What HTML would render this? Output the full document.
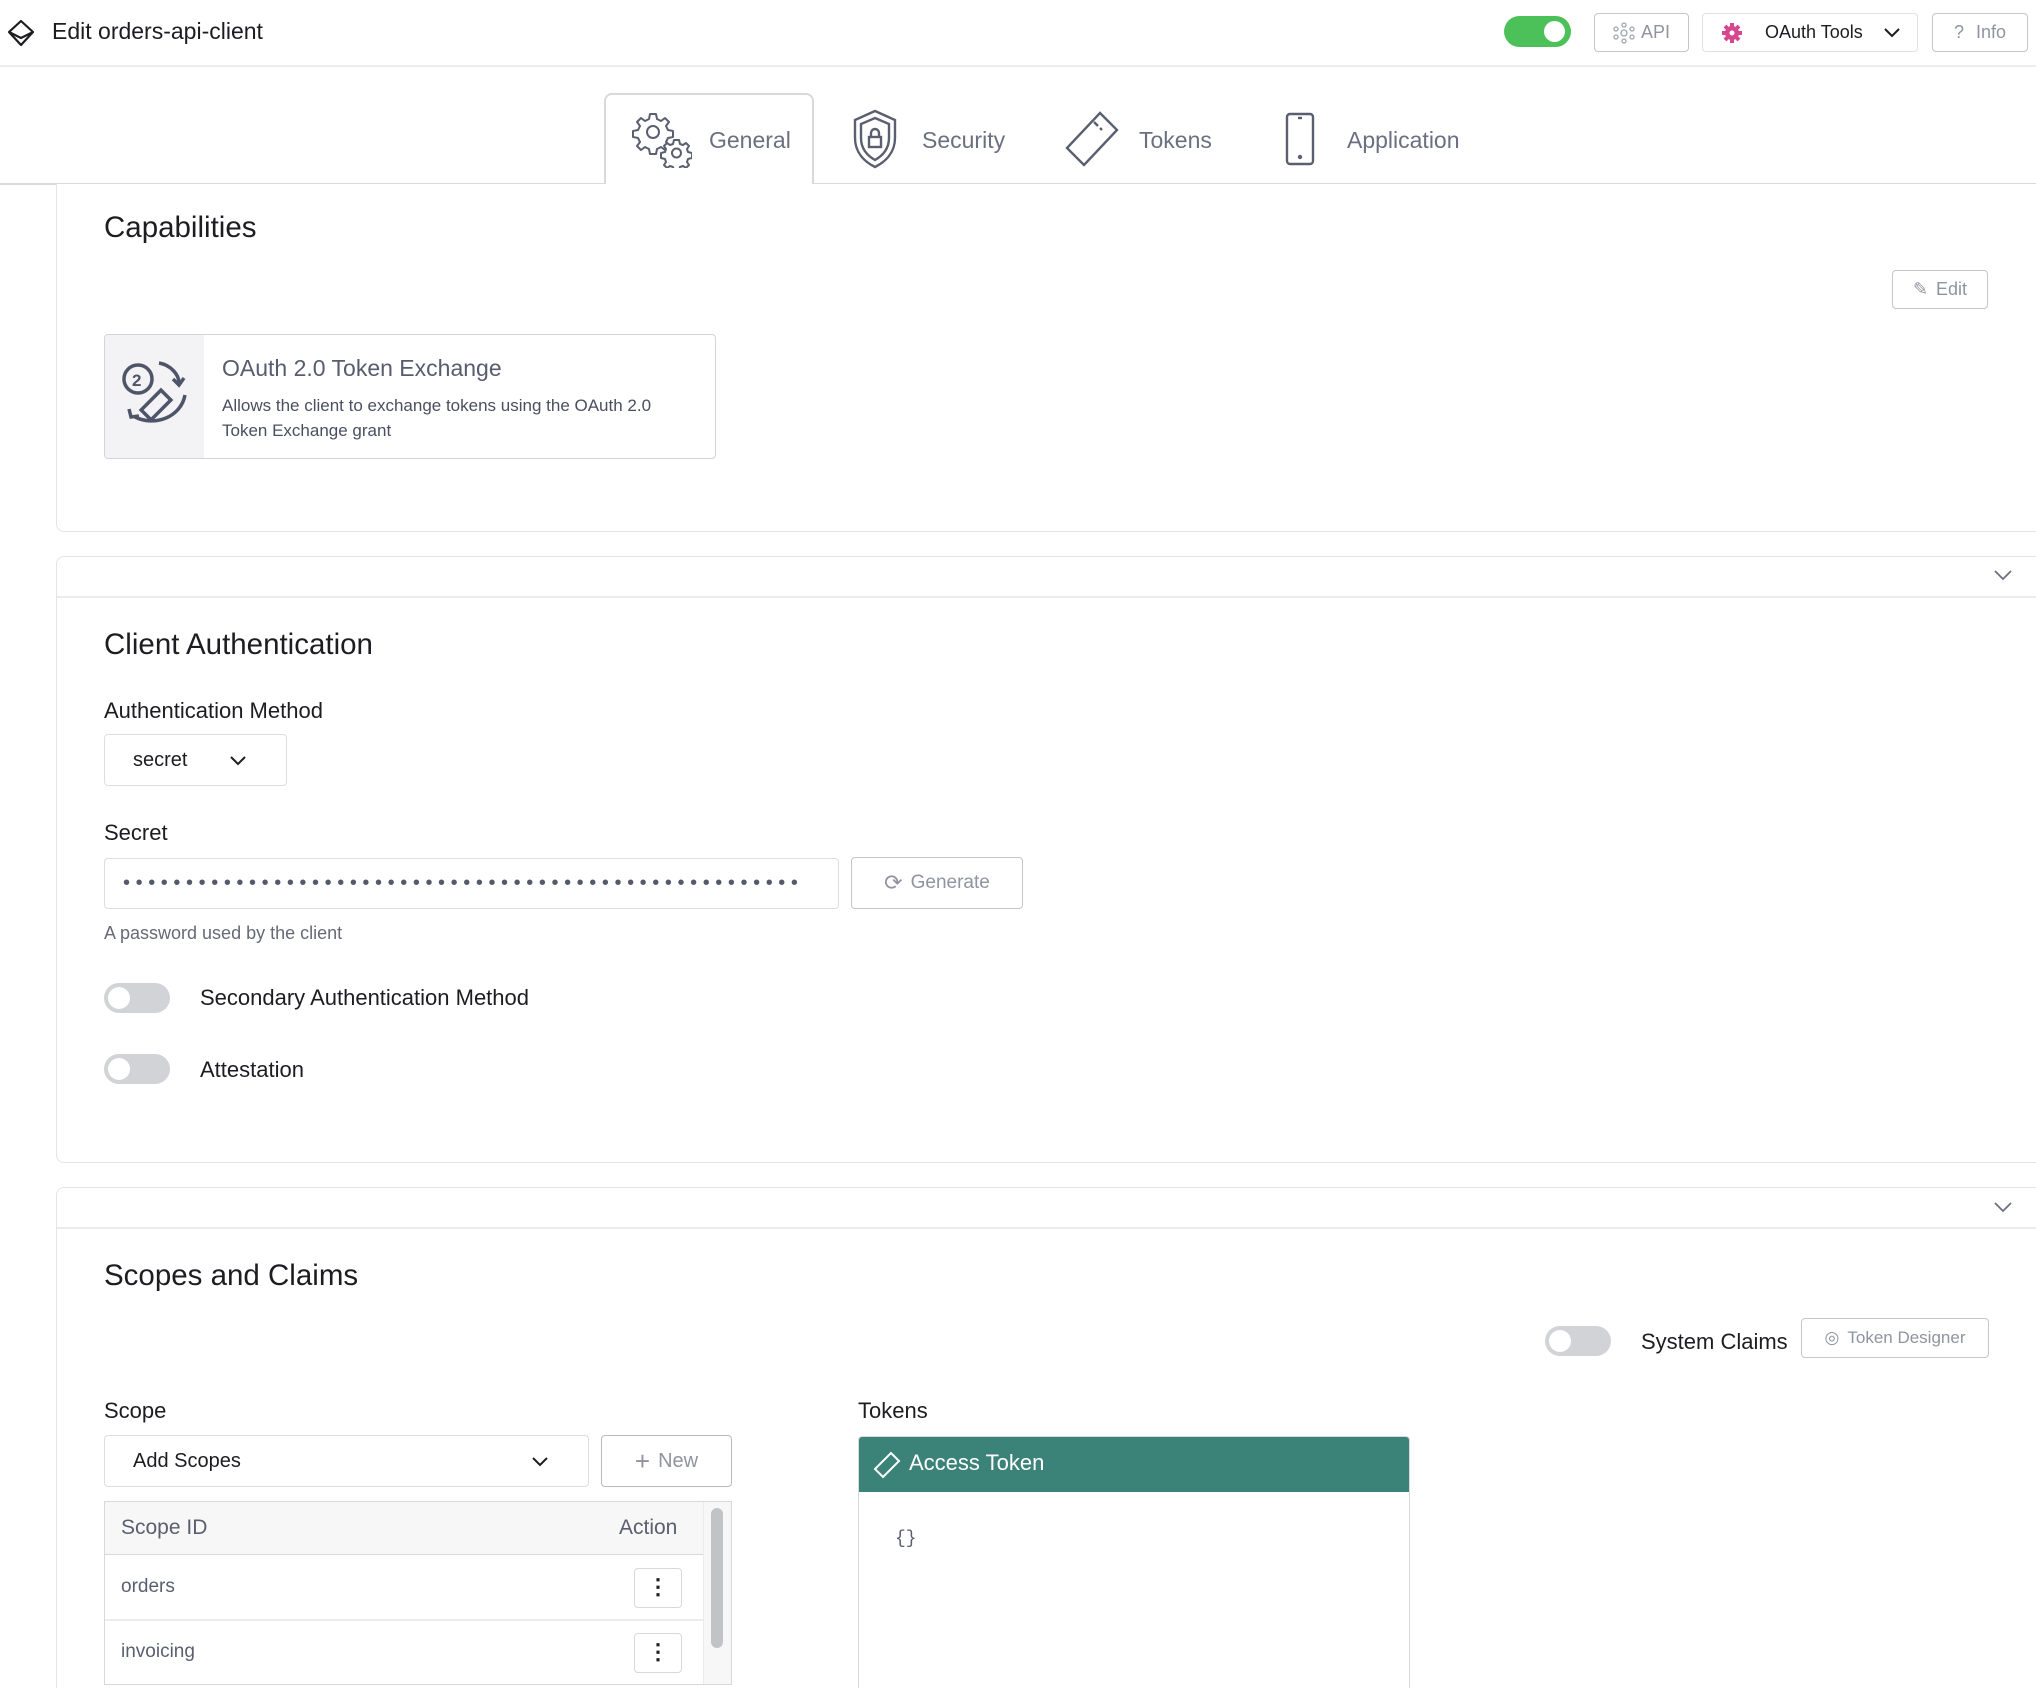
<!DOCTYPE html>
<html><head><meta charset="utf-8"><style>
*{box-sizing:border-box;margin:0;padding:0}
html,body{width:2036px;height:1688px;overflow:hidden}
body{background:#fff;font-family:"Liberation Sans",sans-serif;color:#1d1d21;position:relative}
.a{position:absolute}
.btn{position:absolute;border:1.5px solid #c4c6cc;border-radius:4px;background:#fff;display:flex;align-items:center;justify-content:center;color:#9094a0;font-size:18px}
.panel{position:absolute;left:56px;width:1990px;border:1.5px solid #e3e4e8;border-radius:8px;background:#fff}
.tog{position:absolute;width:66px;height:30px;border-radius:15px;background:#d2d3d6}
.tog::after{content:"";position:absolute;left:4px;top:4px;width:22px;height:22px;border-radius:50%;background:#fff}
.h{position:absolute;font-size:29.5px;color:#1d1d21}
.l{position:absolute;font-size:22px;color:#1d1d21}
.tab{position:absolute;font-size:23px;color:#6b7080;top:127px}
</style></head><body>
<svg class="a" style="left:6px;top:18px" width="30" height="30" viewBox="0 0 30 30" fill="none" stroke="#1d1d21" stroke-width="2.2" stroke-linejoin="round"><path d="M15 3 L27 14 L15 27 L3 14 Z"/><path d="M3 14 L15 20 L27 14"/></svg>
<div class="a" style="left:52px;top:18px;font-size:23px">Edit orders-api-client</div>
<div class="a" style="left:1504px;top:16px;width:67px;height:31px;border-radius:16px;background:#4cc159"><div class="a" style="left:40px;top:5px;width:21px;height:21px;border-radius:50%;background:#fff"></div></div>
<div class="btn" style="left:1594px;top:13px;width:95px;height:39px"><svg width="22" height="22" viewBox="0 0 22 22" fill="none" stroke="#a0a4ae" stroke-width="1.3" style="margin-right:6px"><circle cx="11" cy="11" r="3"/><circle cx="11" cy="3" r="2"/><circle cx="11" cy="19" r="2"/><circle cx="3" cy="7" r="2"/><circle cx="19" cy="7" r="2"/><circle cx="3" cy="15" r="2"/><circle cx="19" cy="15" r="2"/></svg>API</div>
<div class="btn" style="left:1702px;top:13px;width:216px;height:39px;border-color:#e0e1e4;color:#1d1d21;justify-content:flex-start;padding-left:18px"><svg width="22" height="22" viewBox="0 0 22 22" style="margin-right:22px"><circle cx="11" cy="11" r="7" fill="#d6478f"/><g stroke="#d6478f" stroke-width="4"><path d="M11 1v20M1 11h20M4 4l14 14M18 4L4 18"/></g><circle cx="11" cy="11" r="2.5" fill="#fff"/></svg>OAuth Tools<svg style="margin-left:20px" width="18" height="12" viewBox="0 0 18 12" fill="none" stroke="#1d1d21" stroke-width="2"><path d="M2 2l7 7 7-7"/></svg></div>
<div class="btn" style="left:1932px;top:13px;width:96px;height:39px"><span style="margin-right:12px">?</span>Info</div>
<div class="a" style="left:0;top:65px;width:2036px;height:1.5px;background:#ececee"></div>
<div class="a" style="left:0;top:183px;width:2036px;height:2px;background:#d8d9dc"></div>
<div class="a" style="left:604px;top:93px;width:210px;height:93px;border:2px solid #d8d9dc;border-bottom:none;border-radius:8px 8px 0 0;background:#fff"></div>
<svg class="a" style="left:632px;top:110px" width="60" height="58" viewBox="0 0 60 58" fill="none" stroke="#5a5f70" stroke-width="2" stroke-linejoin="round">
<path d="M18 4h6l1 5 4 2 4-3 4 4-3 4 2 4 5 1v6l-5 1-2 4 3 4-4 4-4-3-4 2-1 5h-6l-1-5-4-2-4 3-4-4 3-4-2-4-5-1v-6l5-1 2-4-3-4 4-4 4 3 4-2z"/><circle cx="21" cy="22" r="6"/>
<path d="M42 30h5l1 4 3 1 3-2 3 3-2 3 1 3 4 1v5l-4 1-1 3 2 3-3 3-3-2-3 1-1 4h-5l-1-4-3-1-3 2-3-3 2-3-1-3-4-1v-5l4-1 1-3-2-3 3-3 3 2 3-1z" fill="#fff"/><circle cx="44.5" cy="43" r="4.5"/></svg>
<div class="tab" style="left:709px">General</div>
<svg class="a" style="left:850px;top:108px" width="50" height="62" viewBox="0 0 50 62" fill="none" stroke="#5a5f70" stroke-width="2.4"><path d="M25 3 L45 12 V30 C45 45 35 54 25 59 C15 54 5 45 5 30 V12 Z"/><path d="M25 10 L39 16 V30 C39 41 32 48 25 52 C18 48 11 41 11 30 V16 Z"/><rect x="19" y="29" width="12" height="10"/><path d="M21 29v-4a4 4 0 0 1 8 0v4"/></svg>
<div class="tab" style="left:922px">Security</div>
<svg class="a" style="left:1064px;top:110px" width="56" height="58" viewBox="0 0 56 58" fill="none" stroke="#5a5f70" stroke-width="2.4"><path d="M36 3 L53 20 L20 55 L3 38 Z"/><path d="M30 12 l4 4 M36 18 l2 2" /></svg>
<div class="tab" style="left:1139px">Tokens</div>
<svg class="a" style="left:1284px;top:112px" width="32" height="54" viewBox="0 0 32 54" fill="none" stroke="#5a5f70" stroke-width="2.4"><rect x="3" y="2" width="26" height="50" rx="3"/><path d="M14 6h4"/><circle cx="16" cy="45" r="1"/></svg>
<div class="tab" style="left:1347px">Application</div>
<div class="panel" style="top:184px;height:348px;border-top:none;border-radius:0 0 0 8px"></div>
<div class="h" style="left:104px;top:211px">Capabilities</div>
<div class="btn" style="left:1892px;top:270px;width:96px;height:39px"><span style="margin-right:8px">✎</span>Edit</div>
<div class="a" style="left:104px;top:334px;width:612px;height:125px;border:1.5px solid #d3d4d8;border-radius:4px;overflow:hidden">
<div class="a" style="left:0;top:0;width:99px;height:125px;background:#f3f3f5"></div>
<svg class="a" style="left:10px;top:22px" width="80" height="80" viewBox="0 0 80 80" fill="none" stroke="#4f5568" stroke-width="3.5"><circle cx="23" cy="22" r="14"/><text x="17" y="29" font-size="17" font-weight="bold" fill="#4f5568" stroke="none" font-family="Liberation Sans">2</text><path d="M44 6 C56 8 64 18 64 26"/><path d="M58 22 l6 6 5-7"/><path d="M70 38 C66 60 40 70 20 60"/><path d="M14 52 l2 8 8-1"/><rect x="34" y="34" width="14" height="28" transform="rotate(45 41 48)"/></svg>
<div class="a" style="left:117px;top:20px;font-size:23px;color:#575c6e">OAuth 2.0 Token Exchange</div>
<div class="a" style="left:117px;top:58px;font-size:17px;line-height:25px;color:#4a4f60;width:470px">Allows the client to exchange tokens using the OAuth 2.0 Token Exchange grant</div>
</div>
<div class="panel" style="top:556px;height:607px"></div>
<div class="a" style="left:57px;top:596px;width:1979px;height:1.5px;background:#ececee"></div>
<svg class="a" style="left:1994px;top:570px" width="18" height="11" viewBox="0 0 18 11" fill="none" stroke="#6b7080" stroke-width="1.8"><path d="M1 1l8 8 8-8"/></svg>
<div class="h" style="left:104px;top:628px">Client Authentication</div>
<div class="l" style="left:104px;top:698px">Authentication Method</div>
<div class="a" style="left:104px;top:734px;width:183px;height:52px;border:1.5px solid #dcdde0;border-radius:4px"><span class="a" style="left:28px;top:14px;font-size:20px">secret</span><svg class="a" style="left:124px;top:20px" width="18" height="12" viewBox="0 0 18 12" fill="none" stroke="#1d1d21" stroke-width="2"><path d="M2 2l7 7 7-7"/></svg></div>
<div class="l" style="left:104px;top:820px">Secret</div>
<div class="a" style="left:104px;top:858px;width:735px;height:51px;border:1.5px solid #dcdde0;border-radius:4px;overflow:hidden"><div class="a" style="left:18px;top:13px;font-size:20px;letter-spacing:5.6px;color:#555a6a;white-space:nowrap">••••••••••••••••••••••••••••••••••••••••••••••••••••••</div></div>
<div class="btn" style="left:851px;top:857px;width:172px;height:52px;font-size:19px"><span style="margin-right:8px;font-size:22px">⟳</span>Generate</div>
<div class="a" style="left:104px;top:923px;font-size:18px;color:#666a76">A password used by the client</div>
<div class="tog" style="left:104px;top:983px"></div>
<div class="l" style="left:200px;top:985px">Secondary Authentication Method</div>
<div class="tog" style="left:104px;top:1054px"></div>
<div class="l" style="left:200px;top:1057px">Attestation</div>
<div class="panel" style="top:1187px;height:501px;border-bottom:none;border-radius:8px 0 0 0"></div>
<div class="a" style="left:57px;top:1227px;width:1979px;height:1.5px;background:#ececee"></div>
<svg class="a" style="left:1994px;top:1202px" width="18" height="11" viewBox="0 0 18 11" fill="none" stroke="#6b7080" stroke-width="1.8"><path d="M1 1l8 8 8-8"/></svg>
<div class="h" style="left:104px;top:1259px">Scopes and Claims</div>
<div class="tog" style="left:1545px;top:1326px"></div>
<div class="l" style="left:1641px;top:1329px">System Claims</div>
<div class="btn" style="left:1801px;top:1318px;width:188px;height:40px;font-size:17px"><span style="margin-right:8px">◎</span>Token Designer</div>
<div class="l" style="left:104px;top:1398px">Scope</div>
<div class="l" style="left:858px;top:1398px">Tokens</div>
<div class="a" style="left:104px;top:1435px;width:485px;height:52px;border:1.5px solid #dcdde0;border-radius:4px"><span class="a" style="left:28px;top:14px;font-size:20px">Add Scopes</span><svg class="a" style="left:426px;top:20px" width="18" height="12" viewBox="0 0 18 12" fill="none" stroke="#1d1d21" stroke-width="2"><path d="M2 2l7 7 7-7"/></svg></div>
<div class="btn" style="left:601px;top:1435px;width:131px;height:52px;font-size:20px;border-color:#b8bac0"><span style="margin-right:8px;font-size:26px;font-weight:300">+</span>New</div>
<div class="a" style="left:104px;top:1501px;width:628px;height:184px;border:1.5px solid #d8d9dc;overflow:hidden">
<div class="a" style="left:0;top:0;width:598px;height:53px;background:#f7f7f8;border-bottom:1.5px solid #d8d9dc"></div>
<div class="a" style="left:16px;top:14px;font-size:21px;color:#5a5f70">Scope ID</div>
<div class="a" style="left:514px;top:14px;font-size:21px;color:#5a5f70">Action</div>
<div class="a" style="left:0;top:117px;width:598px;height:1.5px;background:#ececee"></div>
<div class="a" style="left:16px;top:74px;font-size:19px;color:#5a5f70">orders</div>
<div class="a" style="left:16px;top:139px;font-size:19px;color:#5a5f70">invoicing</div>
<div class="a" style="left:529px;top:66px;width:48px;height:40px;border:1.5px solid #d8d9dc;border-radius:4px;text-align:center;font-size:22px;line-height:36px;font-weight:bold">⋮</div>
<div class="a" style="left:529px;top:131px;width:48px;height:40px;border:1.5px solid #d8d9dc;border-radius:4px;text-align:center;font-size:22px;line-height:36px;font-weight:bold">⋮</div>
<div class="a" style="left:598px;top:0;width:28px;height:190px;background:#f7f7f8;border-left:1px solid #ececee"></div>
<div class="a" style="left:606px;top:6px;width:12px;height:140px;border-radius:6px;background:#c2c3c7"></div>
</div>
<div class="a" style="left:858px;top:1436px;width:552px;height:252px;border:1.5px solid #d8d9dc;border-bottom:none;border-radius:4px 4px 0 0;overflow:hidden">
<div class="a" style="left:0;top:0;width:552px;height:55px;background:#3b8278"></div>
<svg class="a" style="left:14px;top:14px" width="28" height="28" viewBox="0 0 28 28" fill="none" stroke="#fff" stroke-width="2"><path d="M18 2 L26 10 L10 26 L2 18 Z"/></svg>
<div class="a" style="left:50px;top:13px;font-size:22px;color:#fff">Access Token</div>
<div class="a" style="left:36px;top:92px;font-size:18px;color:#5a5f70;font-family:'Liberation Mono',monospace">{}</div>
</div>
</body></html>
